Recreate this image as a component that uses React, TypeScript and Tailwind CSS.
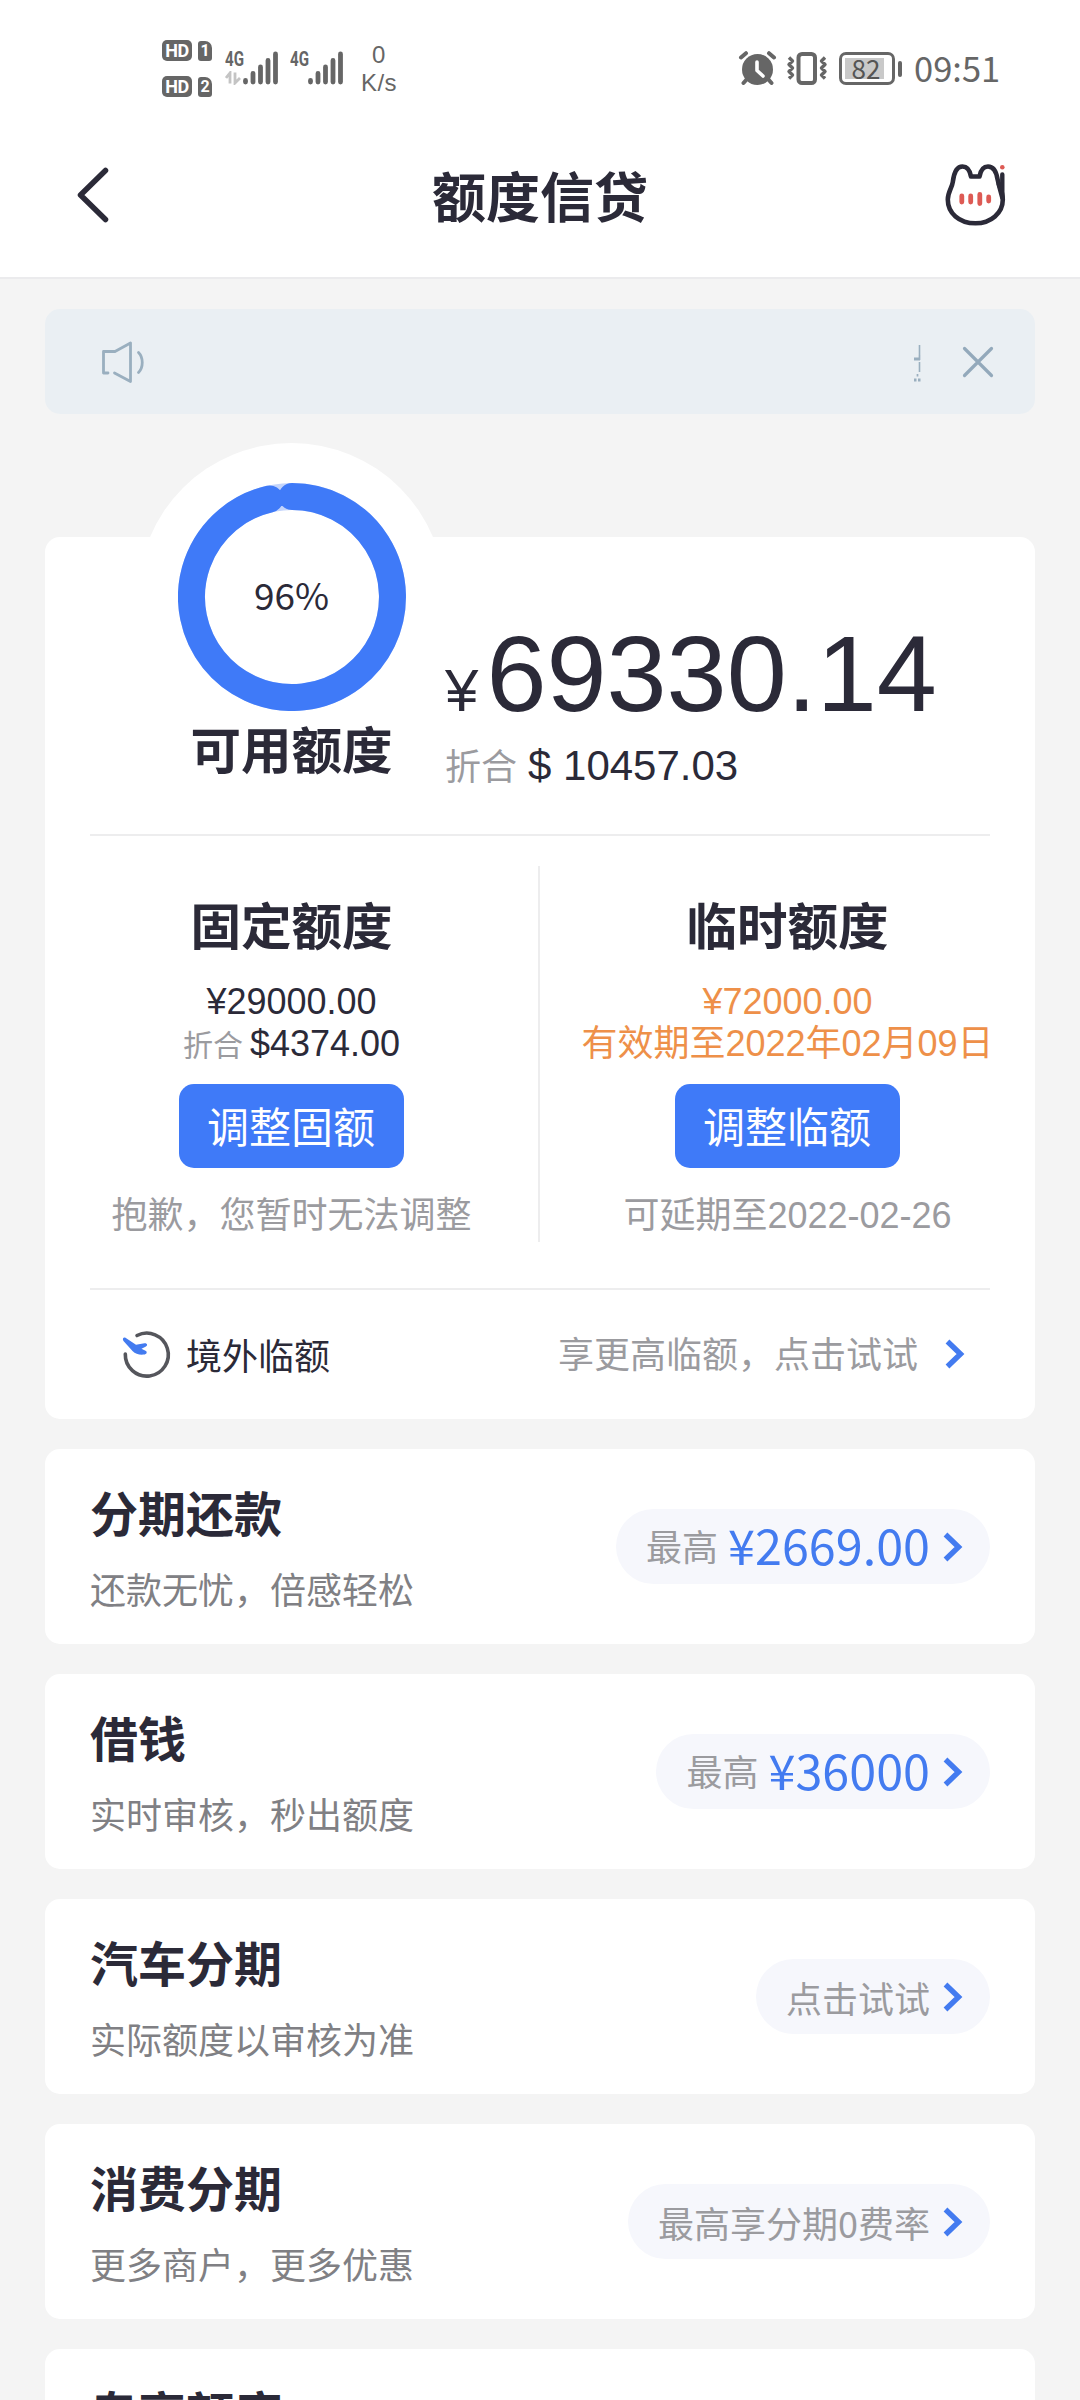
import type { ReactNode } from "react";

const CJK = "font-['Noto_Sans_CJK_SC',sans-serif]";
const LIB = "font-['Liberation_Sans','Noto_Sans_CJK_SC',sans-serif]";

function HdBadge({ n }: { n: string }) {
  return (
    <div className="flex h-[21px] items-center gap-[6px]">
      <span className="flex h-[21px] w-[30px] items-center justify-center rounded-[5px] bg-[#666] font-['Roboto',sans-serif] text-[18px] leading-[21px] font-bold tracking-[-0.5px] text-white">
        HD
      </span>
      <span className="flex h-[20px] w-[14px] items-center justify-center rounded-[3px] rounded-tr-[7px] bg-[#666] font-['Roboto',sans-serif] text-[16px] leading-[20px] font-bold text-white">
        {n}
      </span>
    </div>
  );
}

function Signal({ arrows }: { arrows?: boolean }) {
  return (
    <div className="flex h-[34px] w-[54px]">
      <div className="flex w-[18px] flex-col">
        <span className="block origin-left scale-x-[0.72] font-['Roboto',sans-serif] text-[21px] leading-[16px] font-bold text-[#666]">
          4G
        </span>
        {arrows && (
          <svg className="mt-[4px] h-[14px] w-[16px]" viewBox="0 0 16 14" fill="none" stroke="#c4c4c4" strokeWidth="2.8">
            <path d="M5 12.500V2L1 7M10 1.500v10.500l5-5" />
          </svg>
        )}
      </div>
      <svg className="h-[34px] w-[36px]" viewBox="0 0 36 34" stroke="#666" strokeWidth="4.800" strokeLinecap="round">
        <path d="M2.500 29.500v1.600M10 22.500v8.600M17.500 16v15M25 9.500v21.600M32.500 3v28" />
      </svg>
    </div>
  );
}

function StatusBar() {
  return (
    <div className="flex h-[120px] pl-[162px] text-[#666]">
      <div className="flex w-[63px] flex-col gap-[15px] pt-[40px]">
        <HdBadge n="1" />
        <HdBadge n="2" />
      </div>
      <div className="flex gap-[11px] pt-[51px]">
        <Signal arrows />
        <Signal />
      </div>
      <div className="flex w-[70px] flex-col items-center pt-[41px] font-['Liberation_Sans',sans-serif] text-[24px] leading-[28px] tracking-[0.5px]">
        <span>0</span>
        <span className="whitespace-nowrap">K/s</span>
      </div>
      <svg className="mt-[50px] ml-[324px] h-[38px] w-[90px]" viewBox="738 50 90 38" fill="none" stroke="#666">
        <circle cx="757.500" cy="69.500" r="15.500" fill="#666" stroke="none" />
        <path d="M741 57.500l5-4.300M774 57.500l-5-4.300" strokeWidth="4" strokeLinecap="round" />
        <path d="M747 79l-3.500 4M768 79l3.500 4" strokeWidth="4" strokeLinecap="round" />
        <path d="M757 62v8.500l6 5.500" stroke="#fff" strokeWidth="3.600" strokeLinecap="round" strokeLinejoin="round" />
        <rect x="798.500" y="54" width="16.500" height="29" rx="3.500" strokeWidth="4" />
        <path
          d="M789 57.500l3.500 3.500-3.500 3.500 3.500 3.500-3.500 3.500 3.500 3.500-3.500 3.500M825 57.500l-3.500 3.500 3.500 3.500-3.500 3.500 3.500 3.500-3.500 3.500 3.500 3.500"
          strokeWidth="3.400"
          strokeLinejoin="round"
        />
      </svg>
      <div className="mt-[52px] ml-[11px] flex h-[33px] items-center">
        <div className="flex h-[33px] w-[56px] items-center rounded-[7px] border-[3px] border-[#666] pl-[3px]">
          <div className="flex h-[21px] w-[39px] items-center justify-center bg-[#c9c9c9] pl-[3px] font-['Noto_Sans_CJK_SC',sans-serif] text-[26px] leading-[21px] text-[#555]">
            <span className="-mt-[3px]">82</span>
          </div>
        </div>
        <div className="ml-[3px] h-[16px] w-[4px] rounded-full bg-[#666]" />
      </div>
      <span className={`${CJK} mt-[48px] ml-[12px] text-[34.5px] leading-[38px]`}>09:51</span>
    </div>
  );
}

function Header() {
  return (
    <div className="flex h-[157px] items-start justify-between pr-[73px] pl-[76px]">
      <svg
        className="mt-[45px] h-[60px] w-[63px]"
        viewBox="76 165 63 60"
        fill="none"
        stroke="#2b2a38"
        strokeWidth="5.500"
        strokeLinecap="round"
        strokeLinejoin="round"
      >
        <path d="M105.500 170.500L80.500 195l25 24.500" />
      </svg>
      <h1 className={`${CJK} mt-[48px] text-[54px] leading-[54px] font-bold text-[#2b2a38]`}>额度信贷</h1>
      <svg className="mt-[42px] h-[66px] w-[66px]" viewBox="941 162 66 66" fill="none" strokeLinecap="round" strokeLinejoin="round">
        <path
          d="M971 176.500H979.500C980.500 171 983 166.500 988 166.500C994 166.500 996.500 173 997.500 179C998.500 186 1002.800 190 1002.800 199.500C1002.800 213 991 223.300 975.500 223.300C959 223.300 947.800 213 947.800 199.500C947.800 192 952 188 952.800 182C953.800 173.500 956 166.500 962.500 166.500C967.500 166.500 970 171 971 176.500Z"
          stroke="#2b2a38"
          strokeWidth="4.600"
        />
        <path d="M1002.300 174.500V198L998.500 184" stroke="#2b2a38" strokeWidth="4.400" />
        <circle cx="1002.300" cy="167.300" r="2.300" fill="#dd5a54" />
        <path d="M961.800 196v6M970.700 196v6M979.800 194.500v9M988.700 197v4" stroke="#dd5a54" strokeWidth="4.800" />
      </svg>
    </div>
  );
}

function Notice() {
  return (
    <div className="mt-[30px] flex h-[105px] items-center justify-between rounded-[15px] bg-[#eaeff3] pr-[39px] pl-[55px]">
      <svg
        className="h-[46px] w-[48px]"
        viewBox="100 338 48 46"
        fill="none"
        stroke="#9aafbf"
        strokeWidth="2.800"
        strokeLinecap="round"
        strokeLinejoin="round"
      >
        <path d="M108 372H103.500V350.500H115L130.500 342V380.500L114.500 372" />
        <path d="M138.500 351.500C143.500 356.500 143.500 366.500 138.500 371.500" />
      </svg>
      <div className="flex items-center gap-[38px]">
        <svg className="h-[40px] w-[9px]" viewBox="914 342 9 40" fill="none" stroke="#9aafbf">
          <path d="M920.500 345v10M920.500 362v10" strokeWidth="1.600" />
          <path d="M915 359h6M915 380h2.500M919 380h2.500" strokeWidth="3" />
          <path d="M920.500 355v5M918.500 374v2.500" strokeWidth="1.700" />
        </svg>
        <svg className="h-[36px] w-[36px]" viewBox="960 343 36 36" stroke="#93a9bb" strokeWidth="3.200" strokeLinecap="round">
          <path d="M964.500 347.500l27 27M991.500 347.500l-27 27" />
        </svg>
      </div>
    </div>
  );
}

function Ring() {
  return (
    <div className="flex h-[307px] w-[307px] shrink-0 items-center justify-center rounded-full bg-white">
      <div className="relative flex h-[228px] w-[228px] items-center justify-center">
        <svg className="absolute inset-0 h-[228px] w-[228px]" viewBox="-114 -114 228 228" fill="none" strokeWidth="27">
          <circle r="100.500" stroke="#c3d4fb" />
          <path d="M0 -100.500A100.500 100.500 0 1 1 -22.300 -98" stroke="#3f7af8" strokeLinecap="round" />
        </svg>
        <span className={`${CJK} relative mb-[5px] text-[37px] leading-[40px] text-[#2b2a38]`}>96%</span>
      </div>
    </div>
  );
}

function Chevron() {
  return (
    <svg className="h-[30px] w-[20px] shrink-0" viewBox="0 0 20 30" fill="none" stroke="#437bf0" strokeWidth="5.400">
      <path d="M2.500 2.500L15.500 15L2.500 27.500" />
    </svg>
  );
}

function Quota({ title, button, hint, children }: { title: string; button: string; hint: string; children: ReactNode }) {
  return (
    <div className="flex flex-1 flex-col items-center pt-[62px]">
      <h2 className={`${CJK} text-[50.5px] leading-[50px] font-bold text-[#2b2a38]`}>{title}</h2>
      <div className={`${LIB} mt-[33px] flex flex-col items-center text-[36px] leading-[42px] whitespace-nowrap`}>{children}</div>
      <button className={`${CJK} mt-[19px] h-[84px] w-[225px] rounded-[15px] bg-[#3f7af8] pr-[1px] pb-[3px] text-[42px] leading-[60px] text-white`}>
        {button}
      </button>
      <p className={`${LIB} mt-[27px] text-[36px] leading-[42px] whitespace-nowrap text-[#9b9b9f]`}>{hint}</p>
    </div>
  );
}

function LimitCard() {
  return (
    <div className="mt-[123px] h-[882px] rounded-[15px] bg-white">
      <div className="flex h-[297px] pl-[93px]">
        <div className="-mt-[94px] flex w-[307px] flex-col items-center">
          <Ring />
          <h2 className={`${CJK} relative -mt-[28px] text-[50.5px] leading-[50px] font-bold text-[#2b2a38]`}>可用额度</h2>
        </div>
        <div className={`${LIB} pt-[83px] whitespace-nowrap text-[#2b2a38]`}>
          <div className="flex h-[108px] items-baseline gap-[8px] leading-[108px]">
            <span className="text-[60px]">¥</span>
            <span className="text-[108px]">69330.14</span>
          </div>
          <div className="mt-[14px] flex items-baseline gap-[11px] leading-[48px]">
            <span className="text-[36px] text-[#9b9b9f]">折合</span>
            <span className="text-[42px] whitespace-pre">$ 10457.03</span>
          </div>
        </div>
      </div>
      <div className="mx-[45px] h-[2px] bg-[#ededee]" />
      <div className="flex h-[452px]">
        <div className="flex w-[493px]">
          <Quota title="固定额度" button="调整固额" hint="抱歉，您暂时无法调整">
            <span className="text-[#2b2a38]">¥29000.00</span>
            <span className="flex h-[42px] items-baseline gap-[7px] text-[#2b2a38]">
              <span className="text-[30px] text-[#9b9b9f]">折合</span>$4374.00
            </span>
          </Quota>
        </div>
        <div className="mt-[30px] h-[376px] w-[2px] bg-[#ededee]" />
        <div className="flex w-[495px]">
          <Quota title="临时额度" button="调整临额" hint="可延期至2022-02-26">
            <span className="text-[#ee9049]">¥72000.00</span>
            <span className="text-[#ee9049]">有效期至2022年02月09日</span>
          </Quota>
        </div>
      </div>
      <div className="mx-[45px] h-[2px] bg-[#ededee]" />
      <div className="flex h-[127px] items-center pr-[70px] pl-[75px]">
        <svg className="h-[52px] w-[54px]" viewBox="120 1328 54 52" fill="none">
          <path d="M137 1335.500A21.500 21.500 0 1 1 125.300 1354" stroke="#55565c" strokeWidth="3.600" strokeLinecap="round" />
          <path
            d="M125.500 1337.800L136 1344.800L144.500 1343.200C147.500 1343 148 1345.500 145.500 1346.800L141.500 1348.800L146 1351C147.500 1352.500 146.500 1354.300 144 1354.600C139 1355 135.500 1354 132.500 1351L123.500 1341C122 1339 123.500 1336.800 125.500 1337.800Z"
            fill="#437bf0"
          />
        </svg>
        <span className={`${CJK} ml-[12px] text-[36px] leading-[40px] text-[#2b2a38]`}>境外临额</span>
        <span className={`${CJK} mr-[27px] mb-[4px] ml-auto text-[36px] leading-[40px] text-[#9b9b9f]`}>享更高临额，点击试试</span>
        <Chevron />
      </div>
    </div>
  );
}

function ProductCard({ title, sub, children }: { title: string; sub?: string; children?: ReactNode }) {
  return (
    <div className={`${CJK} mt-[30px] flex h-[195px] items-center justify-between rounded-[15px] bg-white px-[45px]`}>
      <div className="flex h-full flex-col pt-[38px]">
        <h3 className="text-[48px] leading-[48px] font-bold text-[#2b2a38]">{title}</h3>
        {sub && <p className="mt-[35px] text-[36px] leading-[36px] text-[#808084]">{sub}</p>}
      </div>
      {children && (
        <div className="flex h-[75px] items-center rounded-full bg-[#f6f7fc] pr-[27px] pl-[30px] whitespace-nowrap">
          {children}
          <div className="ml-[13px] flex">
            <Chevron />
          </div>
        </div>
      )}
    </div>
  );
}

function PillText({ children }: { children: ReactNode }) {
  return <span className="text-[36px] leading-[40px] text-[#9b9b9f]">{children}</span>;
}

function Amount({ value }: { value: string }) {
  return (
    <span className="flex items-center gap-[10px]">
      <span className="-mt-[4px] text-[36px] leading-[40px] text-[#9b9b9f]">最高</span>
      <span className="-mt-[6px] text-[48.5px] leading-[48px] text-[#437bf0]">{value}</span>
    </span>
  );
}

export default function App() {
  return (
    <div className="h-[2400px] w-[1080px] overflow-hidden bg-[#f4f4f4]">
      <div className="border-b-2 border-[#ebebed] bg-white">
        <StatusBar />
        <Header />
      </div>
      <div className="px-[45px]">
        <Notice />
        <LimitCard />
        <ProductCard title="分期还款" sub="还款无忧，倍感轻松">
          <Amount value="¥2669.00" />
        </ProductCard>
        <ProductCard title="借钱" sub="实时审核，秒出额度">
          <Amount value="¥36000" />
        </ProductCard>
        <ProductCard title="汽车分期" sub="实际额度以审核为准">
          <PillText>点击试试</PillText>
        </ProductCard>
        <ProductCard title="消费分期" sub="更多商户，更多优惠">
          <PillText>最高享分期0费率</PillText>
        </ProductCard>
        <ProductCard title="专享额度" />
      </div>
    </div>
  );
}
